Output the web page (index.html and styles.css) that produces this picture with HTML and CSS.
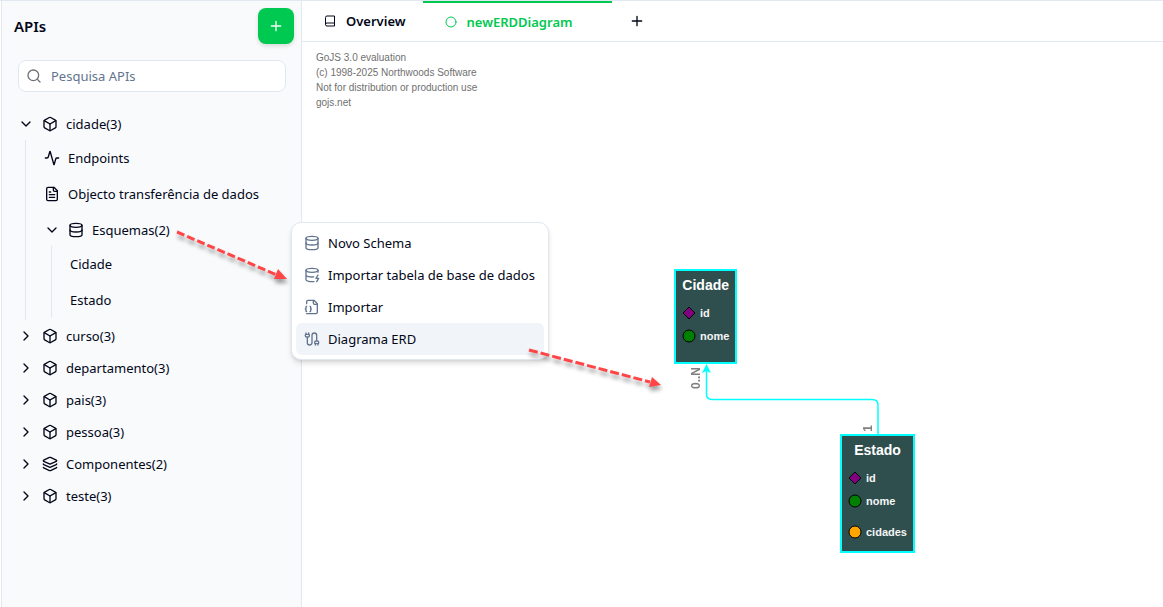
FILE: index.html
```html
<!DOCTYPE html>
<html lang="pt">
<head>
<meta charset="utf-8">
<title>APIs</title>
<meta name="viewport" content="width=device-width, initial-scale=1">
<link rel="stylesheet" href="styles.css">
</head>
<body>
<svg class="sprite" aria-hidden="true">
  <symbol id="box" viewBox="0 0 24 24"><path d="M21 8a2 2 0 0 0-1-1.73l-7-4a2 2 0 0 0-2 0l-7 4A2 2 0 0 0 3 8v8a2 2 0 0 0 1 1.73l7 4a2 2 0 0 0 2 0l7-4A2 2 0 0 0 21 16Z"/><path d="m3.3 7 8.7 5 8.7-5"/><path d="M12 22V12"/></symbol>
  <symbol id="down" viewBox="0 0 24 24"><path d="m6 9 6 6 6-6"/></symbol>
  <symbol id="right" viewBox="0 0 24 24"><path d="m9 18 6-6-6-6"/></symbol>
  <symbol id="database" viewBox="0 0 24 24"><ellipse cx="12" cy="5" rx="9" ry="3"/><path d="M3 5v14a9 3 0 0 0 18 0V5"/><path d="M3 12a9 3 0 0 0 18 0"/></symbol>
  <symbol id="plus" viewBox="0 0 24 24"><path d="M5 12h14M12 5v14"/></symbol>
</svg>
<div class="app">
  <aside class="sidebar">
    <header class="sidebar-header">
      <h1 class="title">APIs</h1>
      <button class="add" aria-label="Adicionar"><svg class="icon"><use href="#plus"/></svg></button>
    </header>
    <div class="search">
      <svg class="icon search-icon" viewBox="0 0 24 24"><circle cx="11" cy="11" r="8"/><path d="m21 21-4.3-4.3"/></svg>
      <input class="search-input" type="text" aria-label="Pesquisa APIs" placeholder="Pesquisa APIs">
    </div>
    <nav>
      <ul class="tree">
        <li>
          <button class="row" aria-expanded="true"><svg class="icon"><use href="#down"/></svg><svg class="icon"><use href="#box"/></svg>cidade(3)</button>
          <ul class="branch">
            <li><button class="row"><svg class="icon" viewBox="0 0 24 24"><path d="M22 12h-2.48a2 2 0 0 0-1.93 1.46l-2.35 8.36a.25.25 0 0 1-.48 0L9.24 2.18a.25.25 0 0 0-.48 0l-2.35 8.36A2 2 0 0 1 4.49 12H2"/></svg>Endpoints</button></li>
            <li><button class="row"><svg class="icon" viewBox="0 0 24 24"><path d="M15 2H6a2 2 0 0 0-2 2v16a2 2 0 0 0 2 2h12a2 2 0 0 0 2-2V7Z"/><path d="M14 2v4a2 2 0 0 0 2 2h4M10 9H8M16 13H8M16 17H8"/></svg>Objecto transferência de dados</button></li>
            <li>
              <button class="row" aria-expanded="true"><svg class="icon"><use href="#down"/></svg><svg class="icon"><use href="#database"/></svg>Esquemas(2)</button>
              <ul class="branch">
                <li><button class="row">Cidade</button></li>
                <li><button class="row">Estado</button></li>
              </ul>
            </li>
          </ul>
        </li>
        <li><button class="row" aria-expanded="false"><svg class="icon"><use href="#right"/></svg><svg class="icon"><use href="#box"/></svg>curso(3)</button></li>
        <li><button class="row" aria-expanded="false"><svg class="icon"><use href="#right"/></svg><svg class="icon"><use href="#box"/></svg>departamento(3)</button></li>
        <li><button class="row" aria-expanded="false"><svg class="icon"><use href="#right"/></svg><svg class="icon"><use href="#box"/></svg>pais(3)</button></li>
        <li><button class="row" aria-expanded="false"><svg class="icon"><use href="#right"/></svg><svg class="icon"><use href="#box"/></svg>pessoa(3)</button></li>
        <li><button class="row" aria-expanded="false"><svg class="icon"><use href="#right"/></svg><svg class="icon" viewBox="0 0 24 24"><path d="M12.83 2.18a2 2 0 0 0-1.66 0L2.6 6.08a1 1 0 0 0 0 1.83l8.58 3.91a2 2 0 0 0 1.66 0l8.58-3.9a1 1 0 0 0 0-1.83Z"/><path d="M2 12a1 1 0 0 0 .58.91l8.6 3.91a2 2 0 0 0 1.65 0l8.58-3.9A1 1 0 0 0 22 12"/><path d="M2 17a1 1 0 0 0 .58.91l8.6 3.91a2 2 0 0 0 1.65 0l8.58-3.9A1 1 0 0 0 22 17"/></svg>Componentes(2)</button></li>
        <li><button class="row" aria-expanded="false"><svg class="icon"><use href="#right"/></svg><svg class="icon"><use href="#box"/></svg>teste(3)</button></li>
      </ul>
    </nav>
  </aside>
  <main class="main">
    <div class="tabs" role="tablist">
      <button class="tab" role="tab"><svg class="icon small" viewBox="0 0 24 24"><path d="M3 18V5a3 3 0 0 1 3-3h15v20H6a3 3 0 0 1 0-6h15"/></svg>Overview</button>
      <button class="tab active" role="tab" aria-selected="true"><svg class="icon small" viewBox="0 0 24 24"><circle cx="12" cy="12" r="10"/></svg>newERDDiagram</button>
      <button class="new-tab" aria-label="Novo separador"><svg class="icon"><use href="#plus"/></svg></button>
    </div>
    <section class="canvas">
      <p class="notice">GoJS 3.0 evaluation<br>(c) 1998-2025 Northwoods Software<br>Not for distribution or production use<br>gojs.net</p>
      <svg class="link" width="190" height="80" viewBox="0 0 190 80" aria-hidden="true">
        <path d="M178 74V43Q178 37.500 172 37.500H12Q6.500 37.500 6.500 32V6" fill="none" stroke="cyan" stroke-width="1.500"/>
        <path d="M6.500 2L11 11L6.500 9L2 11Z" fill="cyan"/>
      </svg>
      <span class="cardinality many">0..N</span>
      <span class="cardinality one">1</span>
      <article class="node cidade">
        <h2 class="node-title">Cidade</h2>
        <ul class="fields">
          <li class="field"><svg class="mark" viewBox="0 0 14 14"><path d="M7 1l6 6-6 6-6-6z" fill="purple" stroke="#000"/></svg>id</li>
          <li class="field"><svg class="mark" viewBox="0 0 14 14"><circle cx="7" cy="7" r="6" fill="green" stroke="#000"/></svg>nome</li>
        </ul>
      </article>
      <article class="node estado">
        <h2 class="node-title">Estado</h2>
        <ul class="fields">
          <li class="field"><svg class="mark" viewBox="0 0 14 14"><path d="M7 1l6 6-6 6-6-6z" fill="purple" stroke="#000"/></svg>id</li>
          <li class="field"><svg class="mark" viewBox="0 0 14 14"><circle cx="7" cy="7" r="6" fill="green" stroke="#000"/></svg>nome</li>
        </ul>
        <ul class="fields">
          <li class="field"><svg class="mark" viewBox="0 0 14 14"><circle cx="7" cy="7" r="6" fill="orange" stroke="#000"/></svg>cidades</li>
        </ul>
      </article>
    </section>
  </main>
</div>
<div class="menu" role="menu">
  <button class="menu-item" role="menuitem"><svg class="icon"><use href="#database"/></svg>Novo Schema</button>
  <button class="menu-item" role="menuitem"><svg class="icon" viewBox="0 0 24 24"><ellipse cx="12" cy="5" rx="9" ry="3"/><path d="M3 5v14a9 3 0 0 0 12 2.840M21 5v3M21 12l-3 5h4l-3 5M3 12a9 3 0 0 0 11.590 2.870"/></svg>Importar tabela de base de dados</button>
  <button class="menu-item" role="menuitem"><svg class="icon" viewBox="0 0 24 24"><path d="M4 22h14a2 2 0 0 0 2-2V7l-5-5H6a2 2 0 0 0-2 2v3"/><path d="M14 2v4a2 2 0 0 0 2 2h4M4 11a1 1 0 0 0-1 1v2a1 1 0 0 1-1 1 1 1 0 0 1 1 1v2a1 1 0 0 0 1 1M9 19a1 1 0 0 0 1-1v-2a1 1 0 0 1 1-1 1 1 0 0 1-1-1v-2a1 1 0 0 0-1-1"/></svg>Importar</button>
  <button class="menu-item selected" role="menuitem"><svg class="icon" viewBox="0 0 24 24"><path d="M17 21v-2a1 1 0 0 1-1-1v-1a2 2 0 0 1 2-2h2a2 2 0 0 1 2 2v1a1 1 0 0 1-1 1v2M19 15V6.500a3.500 3.500 0 0 0-7 0v11a3.500 3.500 0 0 1-7 0V9M21 21v-2h-4M3 5h4V3M7 5a1 1 0 0 1 1 1v1a2 2 0 0 1-2 2H4a2 2 0 0 1-2-2V6a1 1 0 0 1 1-1V3"/></svg>Diagrama ERD</button>
</div>
<svg class="pointer first" width="120" height="64" viewBox="0 0 120 64" aria-hidden="true">
  <path d="M5 5L105 48" fill="none" stroke="#ff4545" stroke-width="3" stroke-dasharray="8 3"/>
  <path d="M115 52L102 52L106 42Z" fill="#ff4545"/>
</svg>
<svg class="pointer second" width="144" height="56" viewBox="0 0 144 56" aria-hidden="true">
  <path d="M5 5L126 37" fill="none" stroke="#ff4545" stroke-width="3" stroke-dasharray="9 3"/>
  <path d="M137 40L125 42L128 32Z" fill="#ff4545"/>
</svg>
</body>
</html>
```
FILE: styles.css
```css
* { box-sizing: border-box; }

body {
  margin: 0;
  font: 13px/20px "Noto Sans", sans-serif;
  color: #020618;
  background: #fff;
}

button {
  font: inherit;
  color: inherit;
  background: none;
  border: 0;
  padding: 0;
  cursor: pointer;
}

ul { list-style: none; margin: 0; padding: 0; }

.sprite { display: none; }

.icon {
  width: 16px;
  height: 16px;
  flex: none;
  fill: none;
  stroke: currentColor;
  stroke-width: 2;
  stroke-linecap: round;
  stroke-linejoin: round;
}

.app {
  display: flex;
  min-height: 100vh;
  padding-left: 1px;
  border-top: 1px solid #e2e8f0;
}

.sidebar {
  flex: 0 0 301px;
  background: #f8fafc;
  border: solid #e2e8f0;
  border-width: 0 1px;
}

.sidebar-header {
  display: flex;
  align-items: center;
  justify-content: space-between;
  padding: 7px 7px 16px 12px;
}

.title { margin: 0; font-size: 15px; font-weight: 600; }

.add {
  display: grid;
  place-items: center;
  width: 36px;
  height: 36px;
  color: #f8fafc;
  background: #00c951;
  border-radius: 8px;
  box-shadow: 0 2px 4px #0002;
}

.search { display: grid; align-items: center; margin: 0 15px 16px 16px; }
.search > * { grid-area: 1 / 1; }
.search-icon { z-index: 1; margin-left: 8px; color: #71717b; }

.search-input {
  width: 100%;
  height: 32px;
  padding: 0 12px 0 32px;
  font: inherit;
  border: 1px solid #e2e8f0;
  border-radius: 8px;
  background: #fff;
}
.search-input::placeholder { color: #62748e; opacity: 1; }

.tree { padding-left: 16px; }

.row {
  display: flex;
  align-items: center;
  gap: 8px;
  width: 100%;
  height: 32px;
  text-align: left;
  white-space: nowrap;
}

.branch { margin-left: 7px; padding-left: 18px; border-left: 1px solid #e2e8f0; }
.branch > li { padding: 2px 0; }

.main { flex: 1; display: flex; flex-direction: column; min-width: 0; }

.tabs { display: flex; height: 41px; border-bottom: 1px solid #e2e8f0; }

.tab {
  display: flex;
  align-items: center;
  gap: 10px;
  padding: 0 17px 0 22px;
  font-weight: 600;
}
.tab.active {
  padding: 0 40px 0 22px;
  color: #00c951;
  border-top: 2px solid #00c951;
}
.small { width: 12px; height: 12px; }
.new-tab { display: grid; place-items: center; width: 50px; }

.canvas { position: relative; flex: 1; overflow: hidden; font-family: "Liberation Sans", Arial, sans-serif; }

.notice { margin: 8px 14px; font-size: 10px; line-height: 15px; color: #707070; }

.link { position: absolute; left: 398px; top: 320px; }

.cardinality { position: absolute; font-size: 12px; line-height: 14px; font-weight: 700; color: #808080; writing-mode: vertical-rl; rotate: 180deg; }
.many { left: 387px; top: 325px; }
.one { left: 559px; top: 383px; }

.node {
  position: absolute;
  padding: 6px 6px 8px;
  color: #f5f5f5;
  background: #2f4f4f;
  border: 2px solid cyan;
}
.cidade { left: 372px; top: 227px; min-height: 95px; }
.estado { left: 538px; top: 392px; min-height: 119px; }

.node-title { margin: 0 0 8px; font-size: 14px; line-height: 16px; font-weight: 700; text-align: center; color: #fff; }
.fields + .fields { margin-top: 8px; }
.field { display: flex; align-items: center; gap: 4px; height: 23px; font-size: 11px; font-weight: 700; }
.mark { width: 14px; height: 14px; }

.menu {
  position: absolute;
  left: 291px;
  top: 222px;
  width: 258px;
  padding: 4px;
  background: #fff;
  border: 1px solid #e2e8f0;
  border-radius: 10px;
  box-shadow: 0 4px 6px -1px #0002, 0 2px 4px -2px #0002;
}

.menu-item {
  display: flex;
  align-items: center;
  gap: 8px;
  width: 100%;
  height: 32px;
  padding: 0 8px;
  white-space: nowrap;
  border-radius: 6px;
}
.menu-item .icon { color: #62748e; }
.menu-item.selected { background: #f1f5f9; }

.pointer { position: absolute; pointer-events: none; filter: drop-shadow(1px 4px 2px #0006); }
.first { left: 172px; top: 227px; }
.second { left: 524px; top: 345px; }
```
